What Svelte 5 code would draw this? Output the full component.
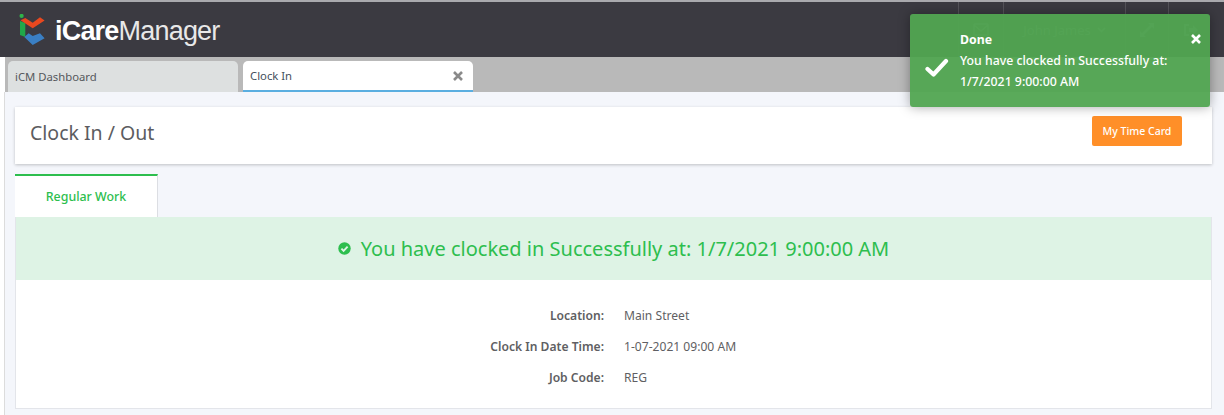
<script>
    let details = [
        { label: 'Location:', value: 'Main Street' },
        { label: 'Clock In Date Time:', value: '1-07-2021 09:00 AM' },
        { label: 'Job Code:', value: 'REG' }
    ];
</script>

<div class="page">
    <header class="topbar">
        <div class="brand">
            <svg width="27" height="32" viewBox="0 0 27 32">
                <circle cx="2.6" cy="1.9" r="2.1" fill="#2fb34a"/>
                <path d="M1 7 L6.3 9 V23 L1 21 Z" fill="#1fa84a"/>
                <path d="M1.5 6.2 L6.3 4 L13.7 8.7 L21 3.3 L25.6 6.4 L13.7 14.2 Z" fill="#e8481f"/>
                <path d="M5.3 23 L9.7 19.3 L13.7 22 L21 19.3 L25.6 24.3 L13.7 31 Z" fill="#3a7fc4"/>
            </svg>
            <span class="wordmark"><b>iCare</b>Manager</span>
        </div>
        <nav class="tools">
            <div class="tool mail">
                <svg width="16" height="13" viewBox="0 0 16 13" fill="none" stroke="#7c7c82" stroke-width="1.4">
                    <rect x="1" y="1" width="14" height="11" rx="1"/>
                    <path d="M1 2 L8 8 L15 2"/>
                </svg>
            </div>
            <div class="tool user">John James
                <svg width="9" height="6" viewBox="0 0 9 6" fill="none" stroke="#7c7c82" stroke-width="1.6"><path d="M1 1 L4.5 4.5 L8 1"/></svg>
            </div>
            <div class="tool expand">
                <svg width="14" height="14" viewBox="0 0 14 14" fill="#7c7c82">
                    <path d="M8 0 H14 V6 L12 4 L4 12 L6 14 H0 V8 L2 10 L10 2 Z"/>
                </svg>
            </div>
            <div class="tool logout">
                <svg width="15" height="14" viewBox="0 0 15 14" fill="#7c7c82">
                    <path d="M1 1 H6 V3 H3 V11 H6 V13 H1 Z"/>
                    <path d="M6 5 H10 V2 L15 7 L10 12 V9 H6 Z"/>
                </svg>
            </div>
        </nav>
    </header>

    <div class="tabstrip">
        <div class="doc-tab">iCM Dashboard</div>
        <div class="doc-tab active">
            <span>Clock In</span>
            <svg width="10" height="10" viewBox="0 0 10 10" stroke="#8a8a8a" stroke-width="2.6"><path d="M1 1 L9 9 M9 1 L1 9"/></svg>
        </div>
    </div>

    <main class="content">
        <section class="title-card">
            <h1>Clock In / Out</h1>
            <button class="timecard">My Time Card</button>
        </section>

        <div class="work-tabs">
            <div class="work-tab">Regular Work</div>
        </div>

        <section class="panel">
            <div class="success">
                <svg width="13" height="13" viewBox="0 0 13 13">
                    <circle cx="6.5" cy="6.5" r="6.2" fill="#2dbe4e"/>
                    <path d="M3.4 6.6 L5.6 8.8 L9.6 4.6" fill="none" stroke="#def3e5" stroke-width="1.9"/>
                </svg>
                <span>You have clocked in Successfully at: 1/7/2021 9:00:00 AM</span>
            </div>
            <div class="details">
                {#each details as row}
                    <div class="label">{row.label}</div>
                    <div class="value">{row.value}</div>
                {/each}
            </div>
        </section>
    </main>

    <div class="toast">
        <svg class="tick" width="24" height="20" viewBox="0 0 24 20" fill="none" stroke="#fff" stroke-width="4.2" stroke-linecap="round" stroke-linejoin="round">
            <path d="M2.5 11 L8.5 16.5 L21 3"/>
        </svg>
        <div class="toast-text">
            <div class="toast-title">Done</div>
            <div>You have clocked in Successfully at:<br>1/7/2021 9:00:00 AM</div>
        </div>
        <svg class="close" width="10" height="10" viewBox="0 0 10 10" stroke="#fff" stroke-width="2.6"><path d="M1 1 L9 9 M9 1 L1 9"/></svg>
    </div>
</div>

<style>
    :global(body) {
        margin: 0;
        background: #fff;
    }

    .page {
        position: relative;
        height: 415px;
        overflow: hidden;
        font-family: "Noto Sans", "Open Sans", sans-serif;
        color: #5f5f63;
    }

    .topbar {
        box-sizing: border-box;
        height: 57px;
        display: flex;
        justify-content: space-between;
        background: #3b3a41;
        border-top: 2px solid #a9a9ad;
    }

    .brand {
        display: flex;
        align-items: center;
        gap: 9px;
        padding-left: 19px;
    }

    .wordmark {
        padding-top: 4px;
        font-family: "Liberation Sans", sans-serif;
        font-size: 27px;
        letter-spacing: -0.8px;
        color: #e8e8e8;
    }

    .wordmark b {
        color: #fff;
    }

    .tools {
        display: flex;
        margin-right: 12px;
    }

    .tool {
        box-sizing: border-box;
        display: flex;
        align-items: center;
        justify-content: center;
        gap: 6px;
        border-left: 1px solid #55545a;
        font-size: 13px;
        color: #7c7c82;
    }

    .mail { width: 45px; }
    .user { width: 122px; }
    .expand { width: 43px; }
    .logout { width: 44px; }

    .tabstrip {
        height: 35px;
        margin-left: 5px;
        box-sizing: border-box;
        padding: 4px 0 0 3px;
        display: flex;
        gap: 5px;
        background: #b9b9b9;
    }

    .doc-tab {
        box-sizing: border-box;
        width: 230px;
        height: 31px;
        padding: 0 7px;
        display: flex;
        align-items: center;
        font-size: 11.3px;
        color: #55585c;
        background: #dde0e0;
        border-radius: 5px 5px 0 0;
    }

    .doc-tab.active {
        justify-content: space-between;
        padding-right: 10px;
        color: #44505c;
        background: #fff;
        border-bottom: 2px solid #5aaee0;
    }

    .content {
        box-sizing: border-box;
        height: 323px;
        margin-left: 4px;
        padding: 15px 12px 0 10px;
        background: #f4f6fb;
        border-left: 1px solid #dcdcdc;
    }

    .title-card {
        box-sizing: border-box;
        height: 57px;
        padding: 0 30px 6px 15px;
        display: flex;
        align-items: center;
        justify-content: space-between;
        background: #fff;
        box-shadow: 0 1px 3px rgba(0, 0, 0, 0.22);
    }

    h1 {
        margin: 0;
        font-size: 19.5px;
        font-weight: 400;
        color: #5c5c60;
    }

    .timecard {
        width: 90px;
        height: 30px;
        margin-bottom: 4px;
        padding: 0;
        font: 500 10.5px "Noto Sans", sans-serif;
        color: #fff;
        background: #ff8f28;
        border: 0;
        border-radius: 2px;
    }

    .work-tabs {
        margin-top: 10px;
        display: flex;
    }

    .work-tab {
        box-sizing: border-box;
        width: 143px;
        height: 43px;
        display: flex;
        align-items: center;
        justify-content: center;
        font-size: 12.4px;
        font-weight: 500;
        color: #2dbe4e;
        background: #fff;
        border-top: 2px solid #2dbe4e;
        border-right: 1px solid #dcdee3;
    }

    .panel {
        background: #fff;
        border: 1px solid #e3e5ea;
        border-top: 0;
    }

    .success {
        height: 63px;
        display: flex;
        align-items: center;
        justify-content: center;
        gap: 10px;
        font-size: 20px;
        color: #2dbe4e;
        background: #def3e5;
    }

    .details {
        padding: 26px 0 20px;
        display: grid;
        grid-template-columns: 588px 1fr;
        column-gap: 20px;
        row-gap: 11px;
        font-size: 12.1px;
        line-height: 20px;
    }

    .label {
        text-align: right;
        font-weight: 600;
    }

    .toast {
        position: absolute;
        left: 910px;
        top: 14px;
        box-sizing: border-box;
        width: 300px;
        height: 93px;
        padding: 15px 16px 0 15px;
        display: flex;
        align-items: center;
        gap: 11px;
        font-size: 12.3px;
        line-height: 21px;
        font-weight: 500;
        color: #fff;
        background: rgba(81, 165, 81, 0.95);
        border-radius: 3px;
        box-shadow: 0 0 12px rgba(0, 0, 0, 0.35);
    }

    .tick {
        flex: none;
    }

    .toast-text {
        margin-top: -15px;
    }

    .toast-title {
        font-weight: 700;
    }

    .close {
        position: absolute;
        right: 9px;
        top: 20px;
    }
</style>
